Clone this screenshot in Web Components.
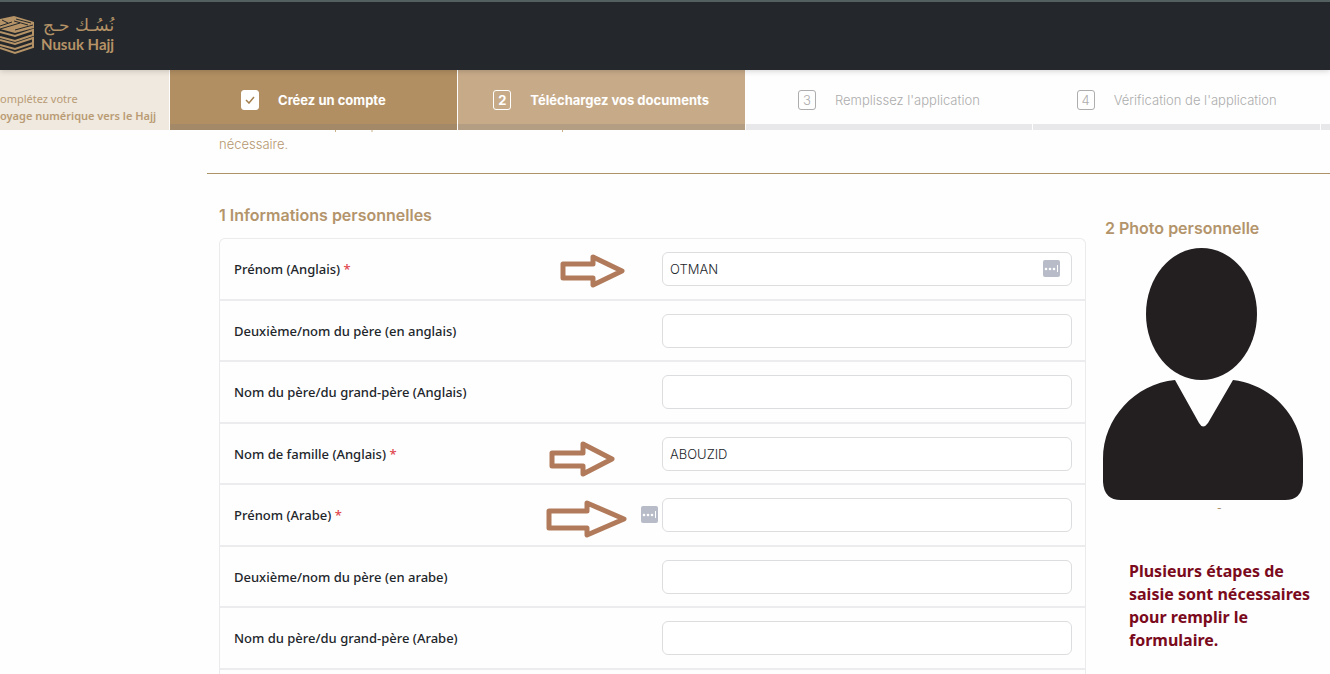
<!DOCTYPE html>
<html lang="fr">
<head>
<meta charset="utf-8">
<meta name="viewport" content="width=device-width, initial-scale=1">
<title>Nusuk Hajj</title>
<style>
  body { margin: 0; background: #fefefe; font-family: Inter, "Liberation Sans", sans-serif; font-size: 14px; color: #22262b; }
</style>
</head>
<body>
<hajj-app></hajj-app>

<template id="t-app">
  <style>
    :host { display: block; }
    main { margin-left: 207px; }
    .intro { position: relative; padding: 4px 12px 18px 12px; border-bottom: 1px solid #ad9468; color: #b5976f; font-size: 13px; line-height: 21px; font-weight: 300; }
    .intro p { margin: 0; }
    .tails { position: absolute; top: 0; left: 0; display: block; }
    .columns { display: grid; grid-template-columns: minmax(0, 1fr) 227px; gap: 17px; padding-left: 12px; }
    h2 { margin: 0; font-size: 16px; line-height: 24px; font-weight: 600; color: #b3946b; }
    .form h2 { padding: 29px 0 11px; }
    form { display: grid; grid-auto-rows: 62px 61px; padding-bottom: 4px; border: 1px solid #ebebed; border-bottom: 0; border-radius: 6px 6px 0 0; }
    .photo h2 { padding: 42px 2px 8px; }
  </style>
  <site-header></site-header>
  <step-bar>
    <step-item state="done" number="1">Créez un compte</step-item>
    <step-item state="current" number="2">Téléchargez vos documents</step-item>
    <step-item number="3">Remplissez l'application</step-item>
    <step-item number="4">Vérification de l'application</step-item>
  </step-bar>
  <main>
    <section class="intro">
      <svg class="tails" width="400" height="2" aria-hidden="true"><path d="M128.500 0v2M165 0v2M355.500 0v2" stroke="#c9b08a" fill="none"/></svg>
      <p>nécessaire.</p>
    </section>
    <div class="columns">
      <section class="form">
        <h2>1 Informations personnelles</h2>
        <form>
          <form-row label="Prénom (Anglais)" required value="OTMAN" manager="inside"><guide-arrow size="small"></guide-arrow></form-row>
          <form-row label="Deuxième/nom du père (en anglais)"></form-row>
          <form-row label="Nom du père/du grand-père (Anglais)"></form-row>
          <form-row label="Nom de famille (Anglais)" required value="ABOUZID"><guide-arrow size="medium"></guide-arrow></form-row>
          <form-row label="Prénom (Arabe)" required manager="outside"><guide-arrow size="large"></guide-arrow></form-row>
          <form-row label="Deuxième/nom du père (en arabe)"></form-row>
          <form-row label="Nom du père/du grand-père (Arabe)"></form-row>
        </form>
      </section>
      <section class="photo">
        <h2>2 Photo personnelle</h2>
        <photo-card><side-note>Plusieurs étapes de<br>saisie sont nécessaires<br>pour remplir le<br>formulaire.</side-note></photo-card>
      </section>
    </div>
  </main>
</template>

<template id="t-header">
  <style>
    :host { display: block; height: 70px; box-sizing: border-box; border-top: 2px solid #53605f; background: #24282c; color: #b59367; box-shadow: 0 1px 6px rgba(0,0,0,.18); position: relative; z-index: 1; }
    a { display: flex; gap: 6px; padding-top: 13px; color: inherit; text-decoration: none; }
    .words { display: flex; flex-direction: column; align-items: stretch; }
    .ar { font: 17px/20px "DejaVu Sans", sans-serif; direction: rtl; text-align: right; }
    .en { font: 700 15px/18px Lato, sans-serif; }
  </style>
  <a href="#" aria-label="Nusuk Hajj">
    <svg width="35" height="41" viewBox="0 0 35 41" fill="none" stroke="#b59367">
      <path fill="#b59367" stroke="none" d="M0 4 14 1l20 6v6L15 18 0 14z"/>
      <path stroke="#24282c" d="M16 4l15 4M14 6l14 4M0 11 12 7M0 14 20 8M2 5l6 3M15 15l18-5"/>
      <path stroke-width="2" d="M0 17l15 4 18-6v5l-18 6-15-4M0 25l15 4 18-6v5l-18 6-15-4M0 33l15 5 18-6v-3"/>
    </svg>
    <span class="words"><span class="ar" lang="ar">نُسُـك حـج</span><span class="en">Nusuk Hajj</span></span>
  </a>
</template>

<template id="t-steps">
  <style>
    :host { display: grid; grid-template-columns: 169px repeat(4, minmax(0, 1fr)) 9px; column-gap: 1px; height: 60px; overflow: hidden; }
    .lead { background: #f0e9df; color: #b99b74; font-family: "Noto Sans", sans-serif; font-size: 11px; line-height: 17px; padding-top: 20px; white-space: nowrap; }
    .lead span, .lead strong { display: block; }
    .lead strong { font-weight: 600; }
    .next { border-bottom: 6px solid #e8e8ea; }
  </style>
  <div class="lead"><span>omplétez votre</span><strong>oyage numérique vers le Hajj</strong></div>
  <slot></slot>
  <div class="next"></div>
</template>

<template id="t-step">
  <style>
    :host { display: flex; align-items: center; justify-content: center; gap: 19px; height: 60px; box-sizing: border-box; box-shadow: inset 0 -6px #e8e8ea; color: #adadad; font-size: 13px; font-weight: 300; white-space: nowrap; }
    :host([state]) { color: #fff; font-weight: 700; box-shadow: inset 0 -6px rgba(120,120,120,.25); }
    :host([state=done]) { background: #b28f63; }
    :host([state=current]) { background: #c7ab89; }
    .mark { display: grid; place-items: center; width: 18px; height: 20px; box-sizing: border-box; border: 1px solid currentColor; border-radius: 3px; }
    :host([state=done]) .mark { background: #fff; }
  </style>
  <span class="mark"></span><span><slot></slot></span>
</template>

<template id="t-row">
  <style>
    :host { display: grid; grid-template-columns: minmax(0, 1fr) 410px; align-items: center; padding: 0 13px 0 14px; border-bottom: 2px solid #ececee; position: relative; }
    label { font-family: "Noto Sans", sans-serif; font-size: 13px; line-height: 20px; font-weight: 500; }
    label i { color: #e0454d; font-style: normal; }
    .field { position: relative; }
    input { display: block; width: 100%; height: 34px; box-sizing: border-box; border: 1px solid #dcdddf; border-radius: 6px; background: #fff; padding: 0 7px; font: 300 13px Inter, "Liberation Sans", sans-serif; color: #22262b; outline: none; }
    button { position: absolute; top: 8px; width: 17px; height: 17px; padding: 0; border: 0; border-radius: 2px; background: #b7bcc8; }
    button.inside { right: 12px; }
    button.outside { left: -21px; }
    button svg { display: block; }
  </style>
  <label for="f"></label>
  <div class="field"><input id="f" type="text"><slot></slot></div>
</template>

<template id="t-arrow">
  <style>
    :host { position: absolute; display: block; }
    :host([size=small]) { right: calc(100% + 36px); top: 2px; width: 66px; height: 34px; }
    :host([size=medium]) { right: calc(100% + 46px); top: 4px; width: 67px; height: 36px; }
    :host([size=large]) { right: calc(100% + 34px); top: 2px; width: 82px; height: 39px; }
    svg { display: block; width: 100%; height: 100%; }
    path { fill: #fefefe; stroke: #b17b5b; stroke-width: 5; stroke-linejoin: round; }
  </style>
  <svg aria-hidden="true"><path/></svg>
</template>

<template id="t-photo">
  <style>
    :host { display: block; }
    svg { display: block; }
    .caption { display: block; padding-left: 114px; font-size: 10px; line-height: 16px; color: #a08050; }
  </style>
  <svg width="200" height="252" viewBox="0 0 200 252" fill="#231f20" role="img" aria-label="Photo">
    <ellipse cx="98.500" cy="66" rx="55.500" ry="66"/>
    <path d="M72 132 96 175q4 7 9 0l25-43c40 5 70 38 70 79v23q-1 18-18 18H18Q1 252 0 234v-23c0-41 32-75 72-79z"/>
  </svg>
  <span class="caption">-</span>
  <slot></slot>
</template>

<template id="t-note">
  <style>
    :host { display: block; margin: 44px 0 0 26px; color: #7a0a1c; font: 700 16px/23px "Noto Sans", sans-serif; white-space: nowrap; }
  </style>
  <slot></slot>
</template>

<script>
  class Base extends HTMLElement {
    constructor() {
      super();
      this.attachShadow({ mode: 'open' });
      this.shadowRoot.append(document.getElementById(this.constructor.template).content.cloneNode(true));
    }
  }
  class SiteHeader extends Base { static template = 't-header'; }
  class StepBar extends Base { static template = 't-steps'; }
  class StepItem extends Base {
    static template = 't-step';
    connectedCallback() {
      const mark = this.shadowRoot.querySelector('.mark');
      if (this.getAttribute('state') === 'done') {
        mark.innerHTML = '<svg width="10" height="8" viewBox="0 0 10 8" fill="none" stroke="#a5804f" stroke-width="1.500" aria-label="Terminé"><path d="M1 4l3 3 5-6"/></svg>';
      } else {
        mark.textContent = this.getAttribute('number');
      }
    }
  }
  class FormRow extends Base {
    static template = 't-row';
    connectedCallback() {
      const root = this.shadowRoot;
      const label = root.querySelector('label');
      label.textContent = this.getAttribute('label');
      if (this.hasAttribute('required')) {
        const star = document.createElement('i');
        star.textContent = '*';
        label.append(' ', star);
      }
      root.querySelector('input').value = this.getAttribute('value') || '';
      const side = this.getAttribute('manager');
      if (side) {
        const button = document.createElement('button');
        button.type = 'button';
        button.className = side;
        button.setAttribute('aria-label', 'Gestionnaire de mots de passe');
        button.innerHTML = '<svg width="17" height="17" viewBox="0 0 17 17" fill="#fff"><circle cx="3" cy="9" r="1.300"/><circle cx="7" cy="9" r="1.300"/><circle cx="11" cy="9" r="1.300"/><path d="M14 5h1v7h-1z"/></svg>';
        root.querySelector('.field').append(button);
      }
    }
  }
  class GuideArrow extends Base {
    static template = 't-arrow';
    static shapes = {
      small: 'M3 10H33V3L62 17 33 31V24H3z',
      medium: 'M3 12H34V3L63 18 34 33V25H3z',
      large: 'M3 11H41V3L78 19 41 35V28H3z'
    };
    connectedCallback() {
      this.shadowRoot.querySelector('path').setAttribute('d', GuideArrow.shapes[this.getAttribute('size')]);
    }
  }
  class PhotoCard extends Base { static template = 't-photo'; }
  class SideNote extends Base { static template = 't-note'; }
  class HajjApp extends Base { static template = 't-app'; }
  customElements.define('site-header', SiteHeader);
  customElements.define('step-item', StepItem);
  customElements.define('step-bar', StepBar);
  customElements.define('form-row', FormRow);
  customElements.define('guide-arrow', GuideArrow);
  customElements.define('photo-card', PhotoCard);
  customElements.define('side-note', SideNote);
  customElements.define('hajj-app', HajjApp);
</script>
</body>
</html>
